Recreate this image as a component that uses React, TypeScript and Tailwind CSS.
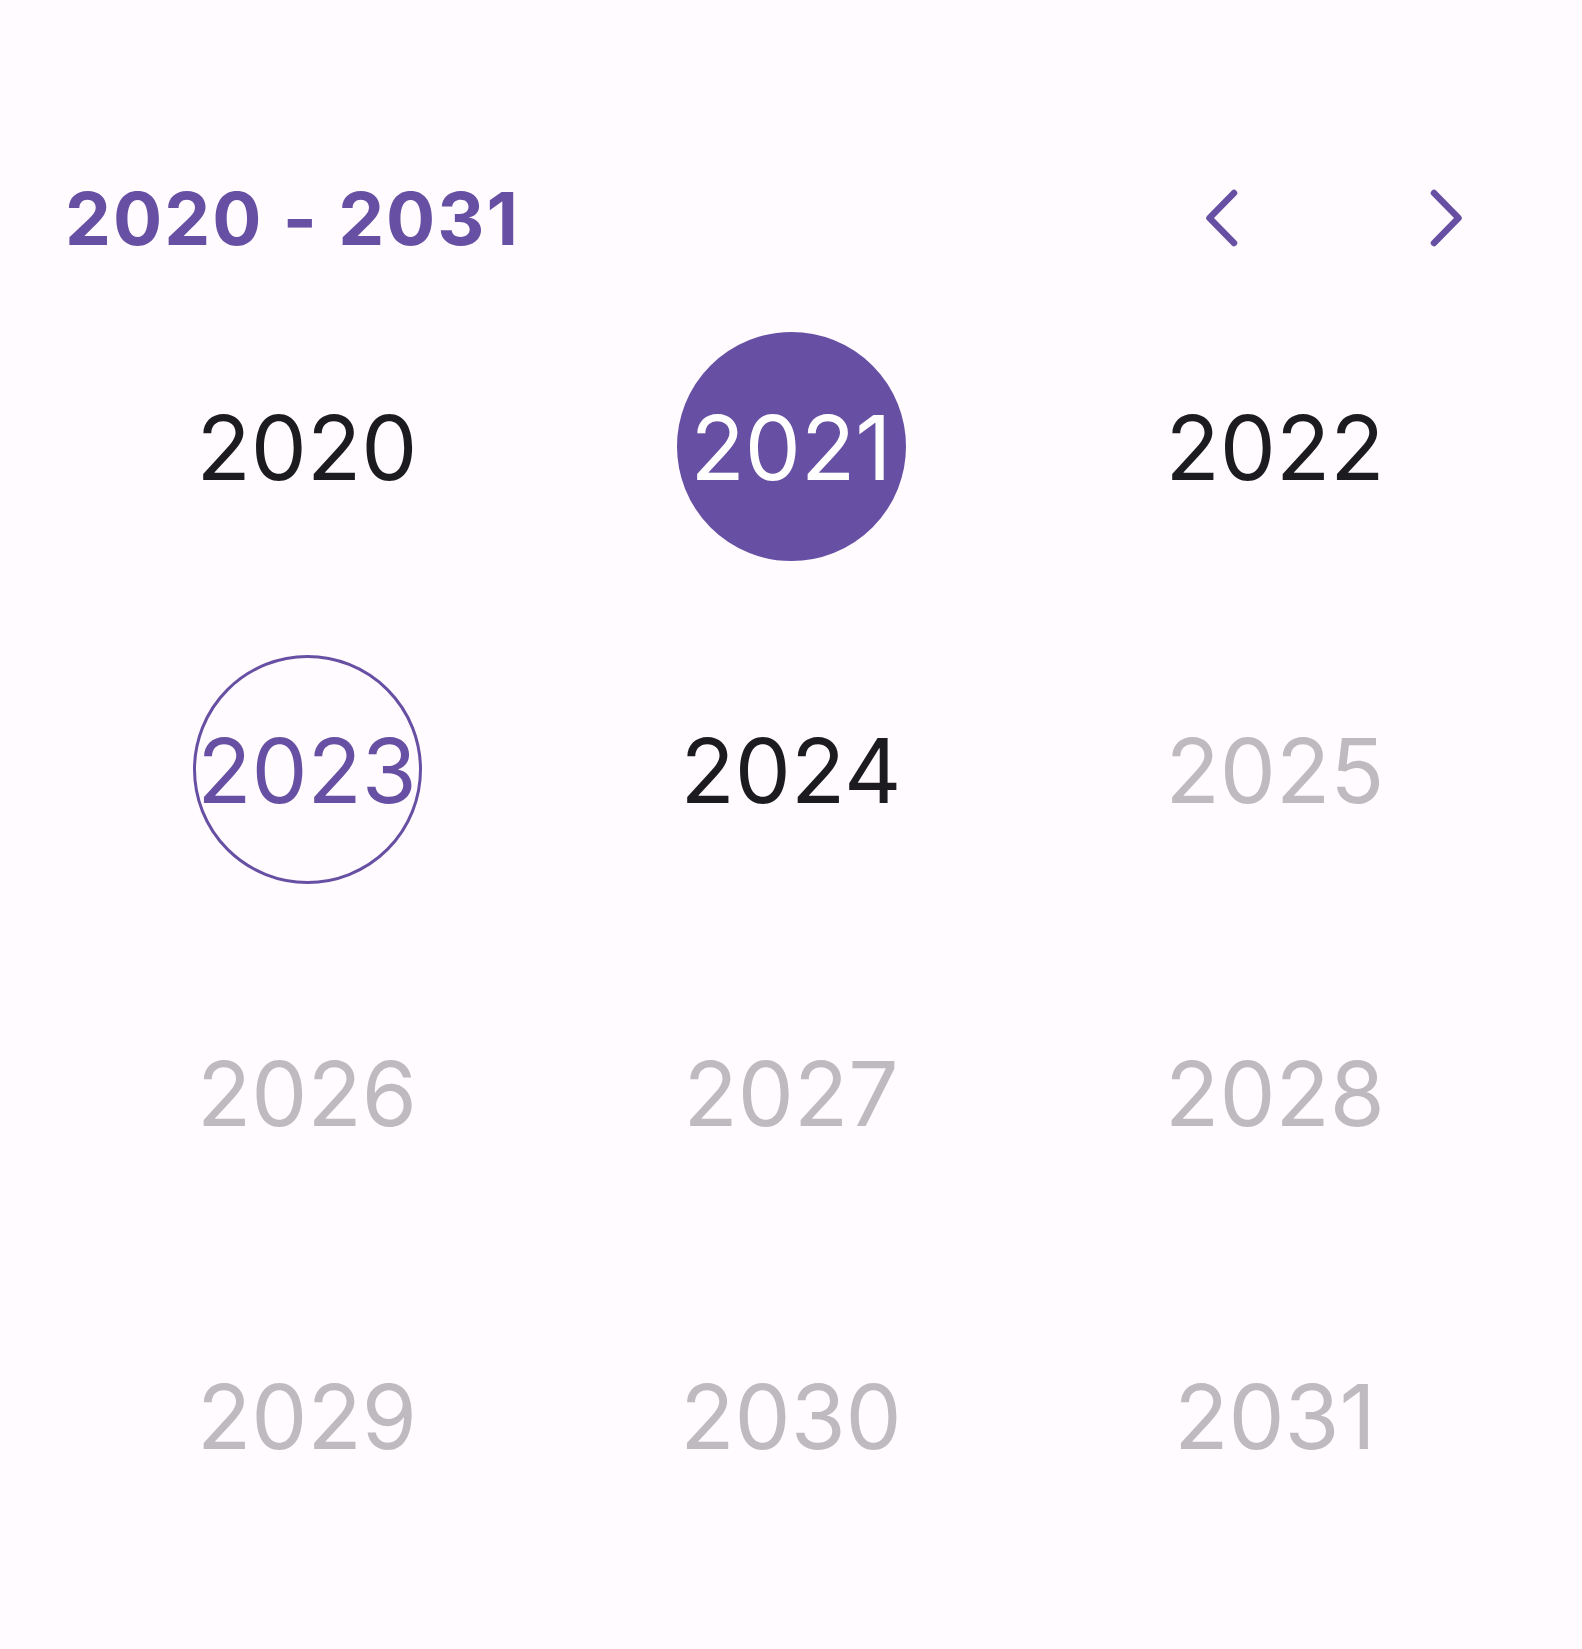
import React from 'react';

const years = [2020, 2021, 2022, 2023, 2024, 2025, 2026, 2027, 2028, 2029, 2030, 2031];
const selected = 2021;
const current = 2023;
const maxEnabled = 2024;

function Chevron({ dir }: { dir: 'left' | 'right' }) {
  const d = dir === 'left' ? 'M28 3 L3.5 28 L28 53' : 'M4 3 L28.5 28 L4 53';
  return (
    <svg width="32" height="56" viewBox="0 0 32 56" fill="none" className="overflow-visible">
      <path d={d} stroke="#6750A4" strokeWidth="6.5" strokeLinecap="round" strokeLinejoin="round" />
    </svg>
  );
}

function YearCell({ year }: { year: number }) {
  const isSelected = year === selected;
  const isCurrent = year === current;
  const disabled = year > maxEnabled;

  let circle = 'border-transparent';
  let text = 'text-[#1C1B1F]';
  if (isSelected) {
    circle = 'bg-[#6750A4] border-[#6750A4]';
    text = 'text-white';
  } else if (isCurrent) {
    circle = 'border-[#6750A4]';
    text = 'text-[#6750A4]';
  } else if (disabled) {
    text = 'text-[#BEBABF]';
  }

  return (
    <div className="flex h-[323px] items-center justify-center">
      <div className={`flex h-[229px] w-[229px] items-center justify-center rounded-full border-[3px] ${circle}`}>
        <span className={`pt-[2px] text-[89px] leading-none ${text}`}>{year}</span>
      </div>
    </div>
  );
}

export default function App() {
  return (
    <div className="h-[1649px] w-full bg-[#FFFBFE] pt-[168px]" style={{ fontFamily: 'Inter, Roboto, sans-serif' }}>
      {/* En-tête : plage d'années + navigation */}
      <div className="flex h-[100px] items-center justify-between pl-[65px] pr-[88px]">
        <h1 className="text-[73px] font-bold leading-none tracking-[2px] text-[#6750A4]">2020 - 2031</h1>
        <div className="flex items-center gap-[128px]">
          <button className="flex h-[96px] w-[96px] items-center justify-center">
            <Chevron dir="left" />
          </button>
          <button className="flex h-[96px] w-[96px] items-center justify-center">
            <Chevron dir="right" />
          </button>
        </div>
      </div>

      {/* Grille des années */}
      <div className="mt-[17px] grid grid-cols-3 px-[65px]">
        {years.map((y) => (
          <YearCell key={y} year={y} />
        ))}
      </div>
    </div>
  );
}
